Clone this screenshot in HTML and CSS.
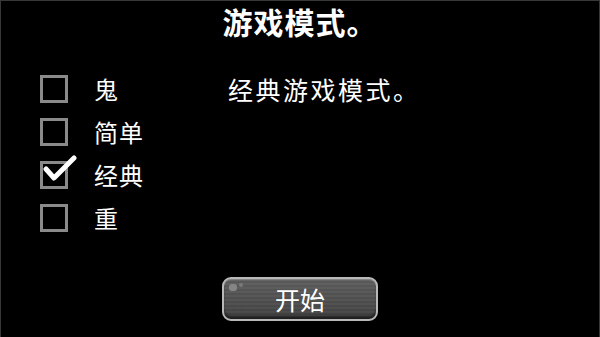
FILE: index.html
```html
<!DOCTYPE html>
<html>
<head>
  <meta charset="utf-8" />
  <title>游戏模式</title>
  <link rel="stylesheet" href="styles.css">
</head>
<body>
  <div class="screen">
    <h1 class="title">游戏模式。</h1>
    <section class="content">
      <ul class="modes">
        <li class="mode"><span class="box"></span><span class="label">鬼</span></li>
        <li class="mode"><span class="box"></span><span class="label">简单</span></li>
        <li class="mode checked">
          <span class="box">
            <svg class="tick" viewBox="0 0 34 26" width="34" height="26">
              <path d="M3 14 L11 23 L31 3" fill="none" stroke="#fff" stroke-width="5" stroke-linecap="round" stroke-linejoin="round"/>
            </svg>
          </span>
          <span class="label">经典</span>
        </li>
        <li class="mode"><span class="box"></span><span class="label">重</span></li>
      </ul>
      <p class="desc">经典游戏模式。</p>
    </section>
    <footer class="footer">
      <button type="button" class="start">
        <span class="shine"></span>
        开始
      </button>
    </footer>
  </div>
</body>
</html>
```

FILE: styles.css
```css
* { box-sizing: border-box; margin: 0; padding: 0; }
html, body {
  width: 600px;
  height: 337px;
  background: #000;
  overflow: hidden;
}
body {
  font-family: "Noto Sans CJK SC", "Noto Sans", sans-serif;
  color: #fff;
}
.screen {
  display: flex;
  flex-direction: column;
  height: 337px;
  border: 1px solid #383838;
  border-bottom: none;
}
.title {
  font-size: 30px;
  font-weight: bold;
  line-height: 40px;
  text-align: center;
  letter-spacing: 1px;
}
.content {
  display: grid;
  grid-template-columns: 227px 1fr;
  margin-top: 34px;
}
.modes {
  list-style: none;
  padding-left: 39px;
  display: flex;
  flex-direction: column;
  gap: 15px;
}
.mode {
  display: flex;
  align-items: center;
  height: 28px;
}
.box {
  position: relative;
  width: 28px;
  height: 28px;
  border: 3px solid #8a8a8a;
  flex: none;
}
.tick {
  position: absolute;
  left: 0;
  top: -9px;
}
.label {
  margin-left: 26px;
  font-size: 24px;
  line-height: 28px;
  letter-spacing: 1px;
}
.desc {
  font-size: 25px;
  line-height: 28px;
  letter-spacing: 2.5px;
}
.footer {
  margin-top: auto;
  padding-bottom: 16px;
  display: flex;
  justify-content: center;
}
.start {
  position: relative;
  width: 156px;
  height: 44px;
  border: 2px solid #b8b8b8;
  border-radius: 9px;
  background:
    repeating-linear-gradient(to bottom, rgba(255,255,255,.03) 0 2px, rgba(0,0,0,.03) 2px 4px),
    linear-gradient(to bottom, #5e5e5e 0%, #525252 45%, #474747 80%, #3a3a3a 100%);
  box-shadow: inset 0 -3px 2px rgba(0,0,0,.45), inset 0 1px 1px rgba(255,255,255,.25);
  font: 25px "Noto Sans CJK SC", "Noto Sans", sans-serif;
  color: #fff;
  line-height: 38px;
}
.shine {
  position: absolute;
  left: 5px;
  top: 5px;
  width: 8px;
  height: 7px;
  border-radius: 3px;
  background: #858585;
}
.shine::after {
  content: "";
  position: absolute;
  left: 10px;
  top: -1px;
  width: 4px;
  height: 4px;
  border-radius: 2px;
  background: #7a7a7a;
}
```
